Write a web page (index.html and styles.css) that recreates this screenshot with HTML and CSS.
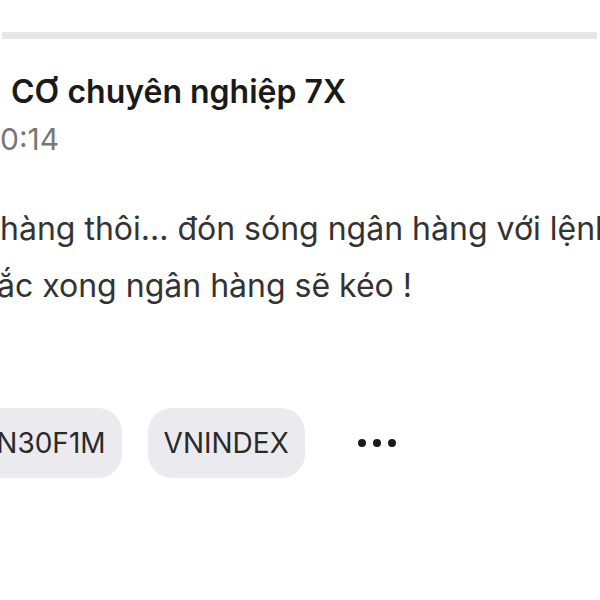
FILE: index.html
```html
<!DOCTYPE html>
<html lang="vi">
<head>
   <meta charset="UTF-8">
   <meta name="viewport" content="width=device-width, initial-scale=1.0">
   <title>Bài viết</title>
   <link rel="stylesheet" href="styles.css">
</head>
<body>

<div class="divider"></div>

<div class="post">
   <div class="post-header">
       <div class="author">CƠ chuyên nghiệp 7X</div>
       <div class="time">0:14</div>
   </div>
   <div class="post-body">
       <p class="line">hàng thôi... đón sóng ngân hàng với lệnh</p>
       <p class="line line-cut">ắc xong ngân hàng sẽ kéo !</p>
   </div>
   <div class="tags">
       <span class="tag">VN30F1M</span>
       <span class="tag">VNINDEX</span>
       <span class="more">
           <svg width="38" height="10" viewBox="0 0 38 10">
               <circle cx="4" cy="5" r="4" fill="#1a1a1a"/>
               <circle cx="19" cy="5" r="4" fill="#1a1a1a"/>
               <circle cx="34" cy="5" r="4" fill="#1a1a1a"/>
           </svg>
       </span>
   </div>
</div>

</body>
</html>
```

FILE: styles.css
```css
body {
    font-family: Inter, "Noto Sans", sans-serif;
    background-color: #ffffff;
    margin: 0;
    overflow: hidden;
    height: 600px;
}
.divider {
    height: 7px;
    margin: 32px 3px 0 2px;
    background-color: #e6e6e6;
}
.post {
    padding-top: 34px;
}
.post-header {
    margin-bottom: 43px;
}
.author {
    font-size: 32px;
    font-weight: 600;
    color: #1a1a1a;
    margin-left: 11px;
    line-height: 38px;
}
.time {
    font-size: 30px;
    color: #777;
    line-height: 36px;
    margin-top: 10px;
}
.post-body {
    font-size: 32px;
    color: #333;
    white-space: nowrap;
}
.line {
    margin: 0;
    line-height: 57px;
}
.line-cut {
    margin-left: -3px;
}
.tags {
    display: flex;
    align-items: center;
    gap: 26px;
    margin-top: 94px;
    margin-left: -39px;
}
.tag {
    background-color: #ebebef;
    border-radius: 24px;
    height: 70px;
    padding: 0 16px;
    display: flex;
    align-items: center;
    font-size: 28px;
    color: #2a2a2a;
}
.more {
    display: flex;
    margin-left: 27px;
}
```
